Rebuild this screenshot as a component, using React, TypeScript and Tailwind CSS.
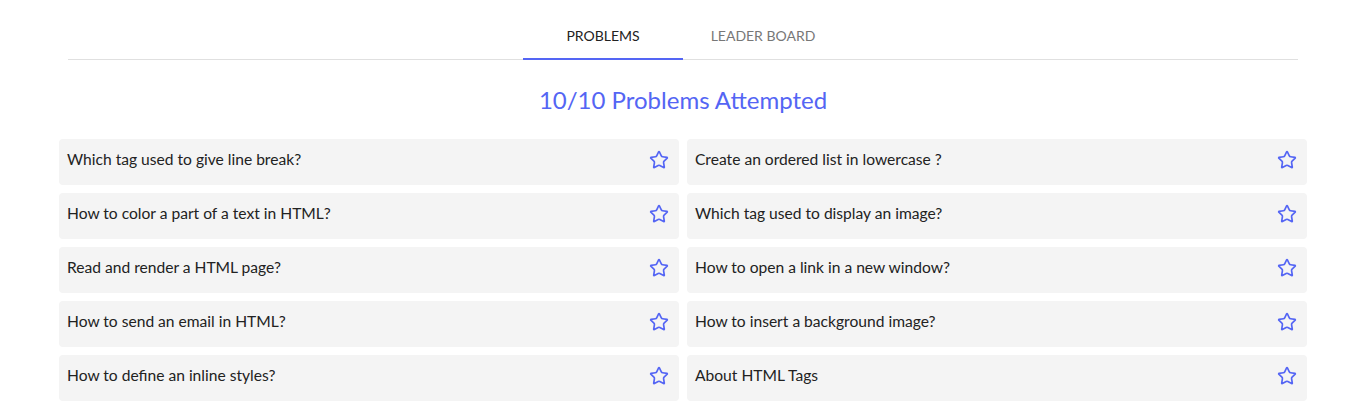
import { Star } from "lucide-react";

const problems = [
  "Which tag used to give line break?",
  "Create an ordered list in lowercase ?",
  "How to color a part of a text in HTML?",
  "Which tag used to display an image?",
  "Read and render a HTML page?",
  "How to open a link in a new window?",
  "How to send an email in HTML?",
  "How to insert a background image?",
  "How to define an inline styles?",
  "About HTML Tags",
];

export default function App() {
  return (
    <div className="min-h-screen bg-white font-['Lato','Noto_Sans',sans-serif]">
      <div className="ml-[59px] w-[1248px]">
        <div className="mx-[9px] mt-[11px] border-b border-[#e0e0e0]">
          <div className="flex justify-center">
            <button className="relative flex h-[48px] w-[160px] items-center justify-center text-[14px] uppercase text-[#222]">
              Problems
              <span className="absolute inset-x-0 -bottom-px h-[2px] bg-[#5465f4]" />
            </button>
            <button className="flex h-[48px] w-[160px] items-center justify-center text-[14px] uppercase text-[#777]">
              Leader Board
            </button>
          </div>
        </div>

        <h2 className="mt-[24px] text-center text-[24px] leading-[32px] text-[#5465f4]">
          10/10 Problems Attempted
        </h2>

        <div className="mt-[23px] grid grid-cols-2 gap-x-[8px] gap-y-[8px]">
          {problems.map((p) => (
            <div
              key={p}
              className="flex h-[46px] items-center justify-between rounded-[4px] bg-[#f4f4f4] pb-[4px] pl-[8px] pr-[10px]"
            >
              <span className="text-[15.6px] text-[#222]">{p}</span>
              <Star
                className="h-[20px] w-[20px] text-[#5465f4]"
                strokeWidth={2}
                strokeLinejoin="miter"
              />
            </div>
          ))}
        </div>
      </div>
    </div>
  );
}
